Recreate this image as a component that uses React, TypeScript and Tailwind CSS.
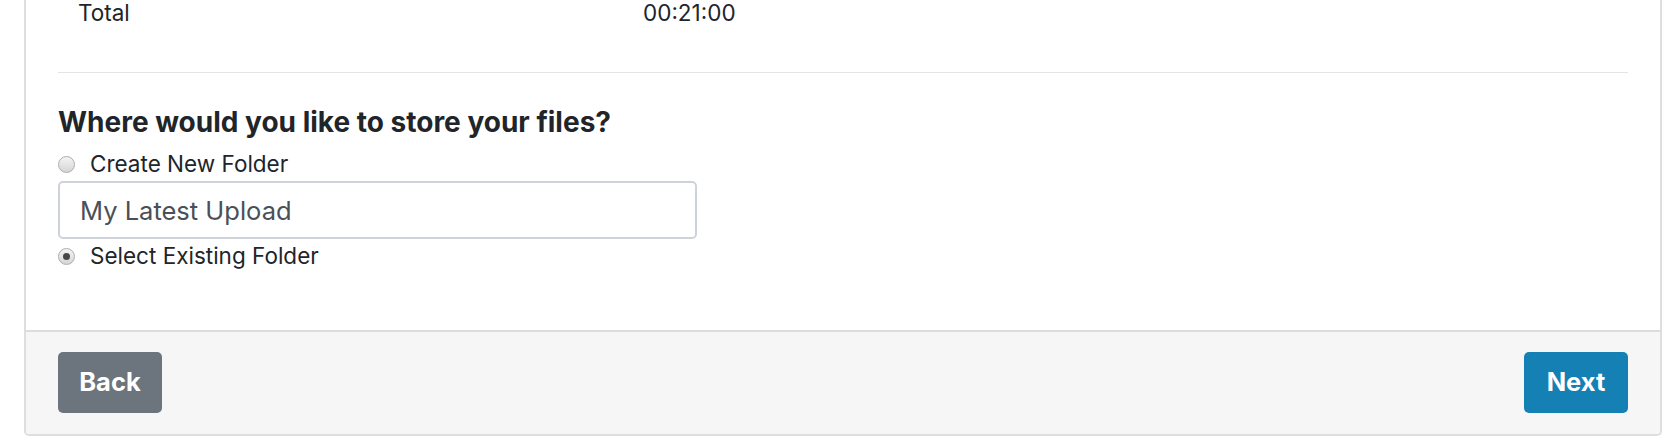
import React, { useState } from 'react';

const Radio: React.FC<{ checked: boolean; label: string; onSelect: () => void }> = ({ checked, label, onSelect }) => (
    <label className="flex items-center h-[26px] cursor-pointer" onClick={onSelect}>
        <span className="w-[17px] h-[17px] rounded-full border border-[#adadad] bg-gradient-to-b from-[#f4f4f4] to-[#d6d6d6] flex items-center justify-center shrink-0">
            {checked && <span className="w-[7px] h-[7px] rounded-full bg-[#474747]" />}
        </span>
        <span className="ml-[15px] text-[22.5px] leading-[26px] text-[#212529]">{label}</span>
    </label>
);

export default function App() {
    const [mode, setMode] = useState<'new' | 'existing'>('existing');
    const [folder, setFolder] = useState('My Latest Upload');

    return (
        <div className="w-full h-[444px] bg-white overflow-hidden" style={{ fontFamily: 'Inter, "Noto Sans", sans-serif' }}>
            <div className="ml-[24px] w-[1638px] border-2 border-t-0 border-[#dedede] rounded-b-[5px] bg-white">
                {/* Card body */}
                <div className="px-[32px] pb-[61px]">
                    {/* Summary row */}
                    <div className="flex text-[22.5px] leading-[26px] text-[#212529]">
                        <div className="w-[565px] pl-[20px]">Total</div>
                        <div className="pl-[20px]">00:21:00</div>
                    </div>

                    <div className="mt-[46px] border-t border-[#e4e4e4]" />

                    <h5 className="mt-[32px] text-[28px] leading-[34px] font-bold text-[#212529]">
                        Where would you like to store your files?
                    </h5>

                    <div className="mt-[12px]">
                        <Radio checked={mode === 'new'} label="Create New Folder" onSelect={() => setMode('new')} />
                    </div>

                    <input
                        className="mt-[4px] block w-[639px] h-[58px] border-2 border-[#ced3da] rounded-[5px] pl-[20px] text-[25.5px] text-[#495057] outline-none"
                        value={folder}
                        onChange={(e) => setFolder(e.target.value)}
                    />

                    <div className="mt-[4px]">
                        <Radio checked={mode === 'existing'} label="Select Existing Folder" onSelect={() => setMode('existing')} />
                    </div>
                </div>

                {/* Card footer */}
                <div className="flex justify-between border-t-2 border-[#dcdcdc] bg-[#f6f6f6] px-[32px] pt-[20px] pb-[21px] rounded-b-[4px]">
                    <button className="w-[104px] h-[61px] rounded-[5px] bg-[#6c757d] text-white text-[25.5px] font-bold">Back</button>
                    <button className="w-[104px] h-[61px] rounded-[5px] bg-[#1480b4] text-white text-[25.5px] font-bold">Next</button>
                </div>
            </div>
        </div>
    );
}
